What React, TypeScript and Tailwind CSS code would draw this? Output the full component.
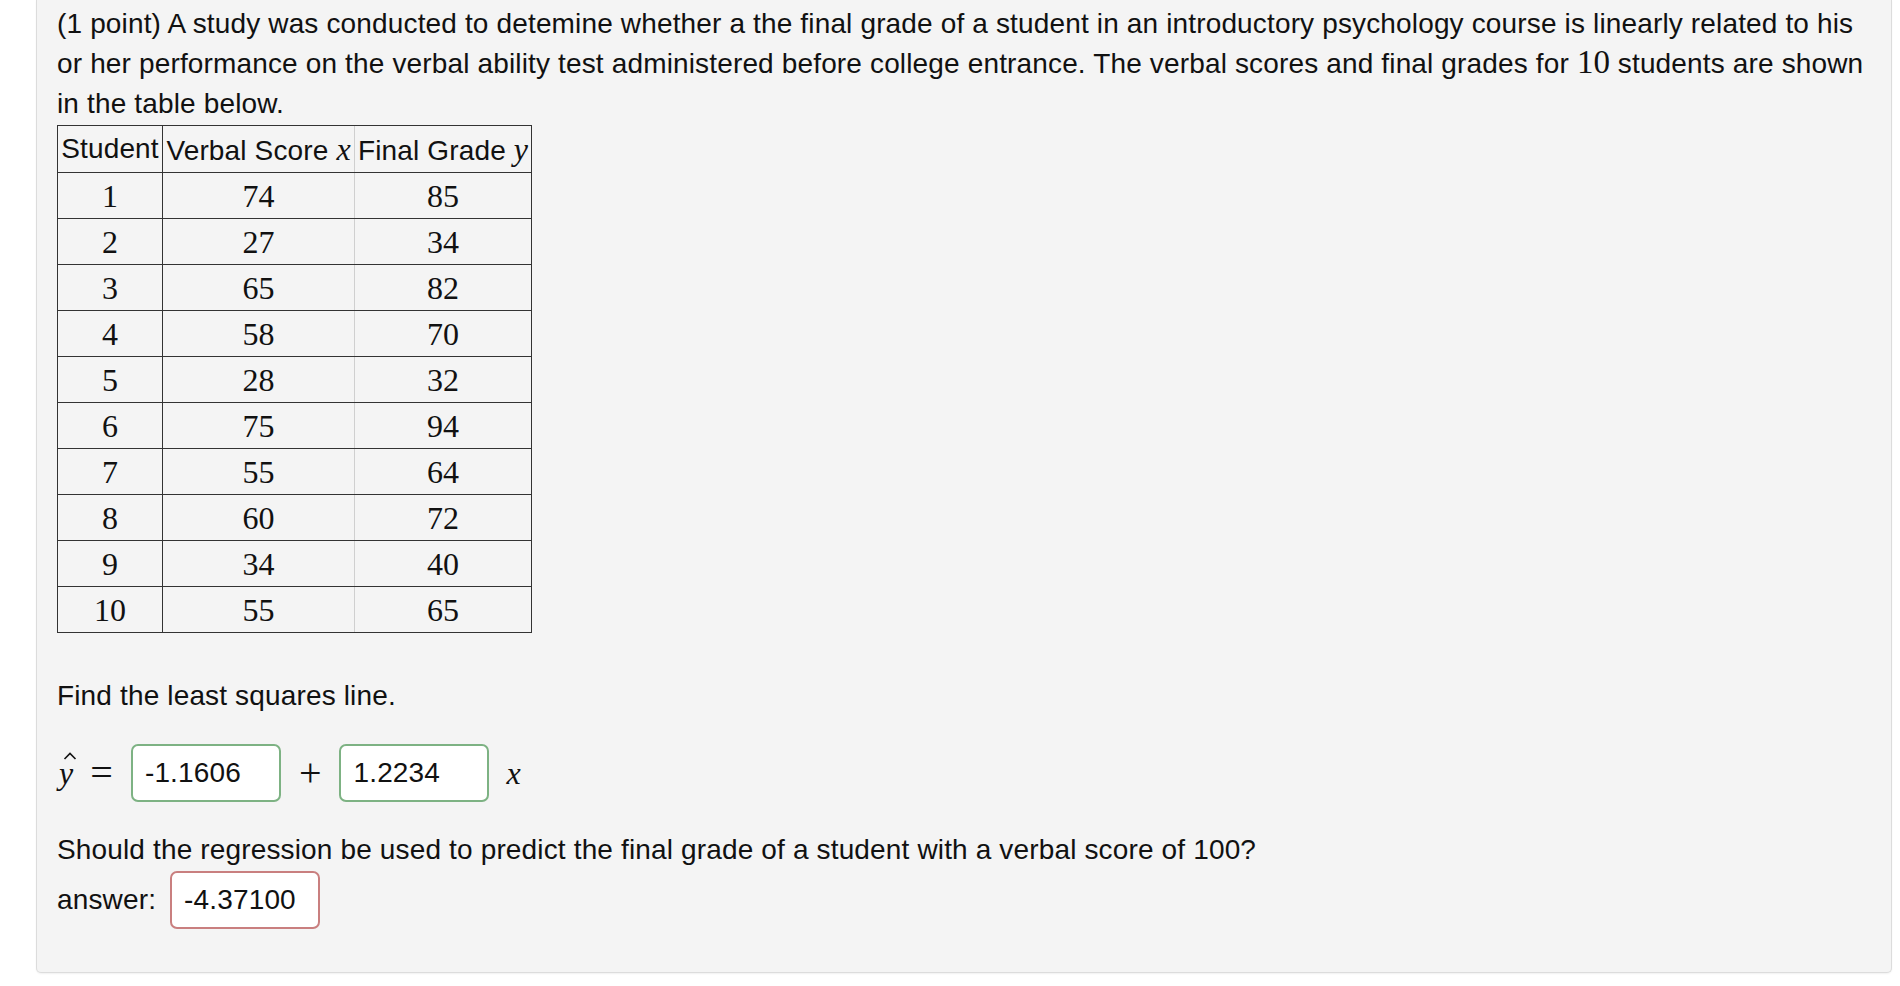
import React from 'react'

const rows: [number, number, number][] = [
  [1, 74, 85],
  [2, 27, 34],
  [3, 65, 82],
  [4, 58, 70],
  [5, 28, 32],
  [6, 75, 94],
  [7, 55, 64],
  [8, 60, 72],
  [9, 34, 40],
  [10, 55, 65],
]

const serif = "font-['Liberation_Serif',serif]"

function MathVar({ children }: { children: React.ReactNode }) {
  return <span className={`${serif} italic text-[32px] tracking-normal`}>{children}</span>
}

function AnswerBox({ value, tone }: { value: string; tone: 'ok' | 'bad' }) {
  const border = tone === 'ok' ? 'border-[#7db283]' : 'border-[#c97f7f]'
  return (
    <div
      className={`w-[150px] h-[58px] bg-white rounded-[7px] border-2 ${border} flex items-center pl-[12px] text-[28px] text-[#111]`}
    >
      {value}
    </div>
  )
}

export default function App() {
  return (
    <div className="min-h-[986px] bg-white font-['Liberation_Sans',Arial,sans-serif] tracking-[0.15px] text-[#111]">
      <div className="ml-[36px] mr-[8px] h-[973px] bg-[#f4f4f4] border-x border-b border-[#dcdcdc] rounded-b-[5px] shadow-[0_1px_2px_rgba(0,0,0,0.06)] pl-[20px] pr-[24px] pt-[4px]">
        <p className="text-[28px] leading-[40px]">
          (1 point) A study was conducted to detemine whether a the final grade of a student in an introductory psychology course is linearly related to his or her performance on the verbal ability test administered before college entrance. The verbal scores and final grades for{' '}
          <span className={`${serif} text-[33px] leading-none tracking-normal`}>10</span> students are shown in the table below.
        </p>

        <table className="mt-[1px] border-collapse border border-[#333]">
          <thead>
            <tr className="h-[47px] leading-none">
              <th className="w-[105px] border border-[#333] font-normal text-[28px] px-[2px]">Student</th>
              <th className="w-[192px] border-y border-l border-[#333] border-r-[#cfcfcf] font-normal text-[28px] px-[2px] whitespace-nowrap">
                Verbal Score <MathVar>x</MathVar>
              </th>
              <th className="w-[177px] border border-[#333] border-l-[#cfcfcf] font-normal text-[28px] px-[2px] whitespace-nowrap">
                Final Grade <MathVar>y</MathVar>
              </th>
            </tr>
          </thead>
          <tbody>
            {rows.map(([s, x, y]) => (
              <tr key={s} className={`h-[46px] leading-none ${serif} text-[32px] tracking-normal`}>
                <td className="border border-[#333] text-center p-0">{s}</td>
                <td className="border-y border-l border-[#333] border-r-[#cfcfcf] text-center p-0">{x}</td>
                <td className="border border-[#333] border-l-[#cfcfcf] text-center p-0">{y}</td>
              </tr>
            ))}
          </tbody>
        </table>

        <p className="mt-[43px] text-[28px] leading-[40px]">Find the least squares line.</p>

        <div className="mt-[28px] flex items-center h-[58px]">
          <span className={`${serif} italic text-[32px] leading-none ml-[2px] relative`}>
            y
            <svg
              className="absolute left-[4px] -top-[5px]"
              width="14"
              height="8"
              viewBox="0 0 14 8"
              fill="none"
            >
              <path d="M1.5 7 L7 1.5 L12.5 7" stroke="#111" strokeWidth="1.6" />
            </svg>
          </span>
          <span className={`${serif} text-[40px] leading-none ml-[17px] mr-[18px] tracking-normal`}>=</span>
          <AnswerBox value="-1.1606" tone="ok" />
          <span className={`${serif} text-[40px] leading-none mx-[18px] tracking-normal`}>+</span>
          <AnswerBox value="1.2234" tone="ok" />
          <span className="ml-[17px] leading-none">
            <MathVar>x</MathVar>
          </span>
        </div>

        <p className="mt-[28px] text-[28px] leading-[40px]">
          Should the regression be used to predict the final grade of a student with a verbal score of 100?
        </p>
        <div className="mt-[1px] flex items-center gap-[14px]">
          <span className="text-[28px]">answer:</span>
          <AnswerBox value="-4.37100" tone="bad" />
        </div>
      </div>
    </div>
  )
}
